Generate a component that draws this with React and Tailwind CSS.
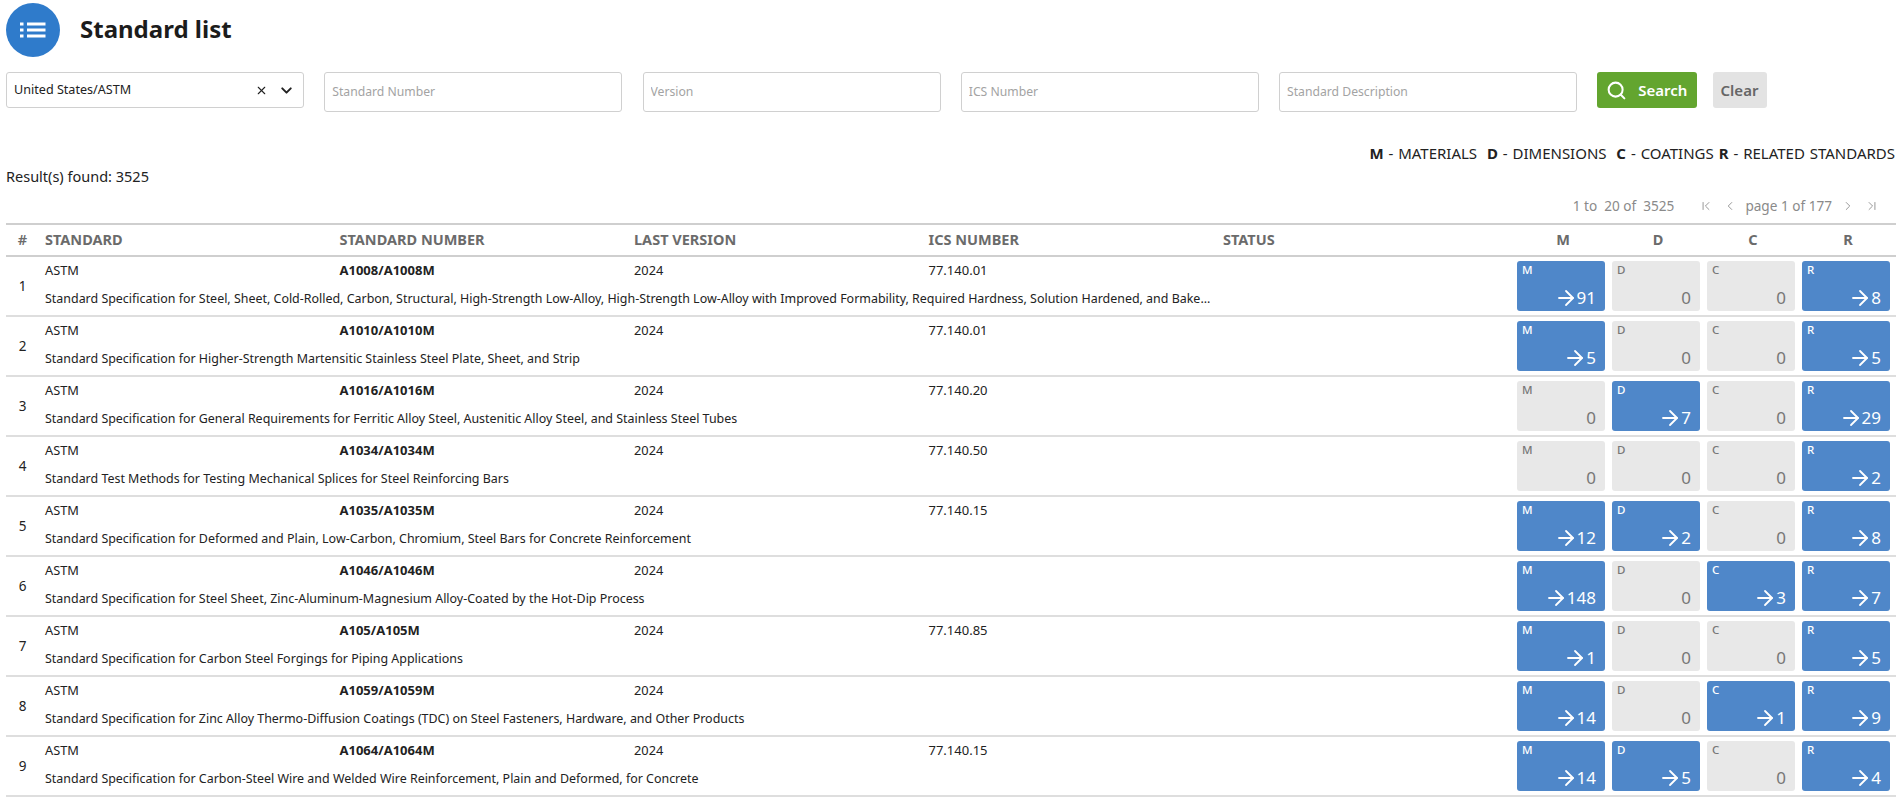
import React from 'react'
import { ChevronDown, X, Search, ArrowRight, ChevronLeft, ChevronRight, ChevronFirst, ChevronLast } from 'lucide-react'

const rows = [
  { n: 1, num: 'A1008/A1008M', ics: '77.140.01', m: 91, d: 0, c: 0, r: 8, desc: 'Standard Specification for Steel, Sheet, Cold-Rolled, Carbon, Structural, High-Strength Low-Alloy, High-Strength Low-Alloy with Improved Formability, Required Hardness, Solution Hardened, and Bake...' },
  { n: 2, num: 'A1010/A1010M', ics: '77.140.01', m: 5, d: 0, c: 0, r: 5, desc: 'Standard Specification for Higher-Strength Martensitic Stainless Steel Plate, Sheet, and Strip' },
  { n: 3, num: 'A1016/A1016M', ics: '77.140.20', m: 0, d: 7, c: 0, r: 29, desc: 'Standard Specification for General Requirements for Ferritic Alloy Steel, Austenitic Alloy Steel, and Stainless Steel Tubes' },
  { n: 4, num: 'A1034/A1034M', ics: '77.140.50', m: 0, d: 0, c: 0, r: 2, desc: 'Standard Test Methods for Testing Mechanical Splices for Steel Reinforcing Bars' },
  { n: 5, num: 'A1035/A1035M', ics: '77.140.15', m: 12, d: 2, c: 0, r: 8, desc: 'Standard Specification for Deformed and Plain, Low-Carbon, Chromium, Steel Bars for Concrete Reinforcement' },
  { n: 6, num: 'A1046/A1046M', ics: '', m: 148, d: 0, c: 3, r: 7, desc: 'Standard Specification for Steel Sheet, Zinc-Aluminum-Magnesium Alloy-Coated by the Hot-Dip Process' },
  { n: 7, num: 'A105/A105M', ics: '77.140.85', m: 1, d: 0, c: 0, r: 5, desc: 'Standard Specification for Carbon Steel Forgings for Piping Applications' },
  { n: 8, num: 'A1059/A1059M', ics: '', m: 14, d: 0, c: 1, r: 9, desc: 'Standard Specification for Zinc Alloy Thermo-Diffusion Coatings (TDC) on Steel Fasteners, Hardware, and Other Products' },
  { n: 9, num: 'A1064/A1064M', ics: '77.140.15', m: 14, d: 5, c: 0, r: 4, desc: 'Standard Specification for Carbon-Steel Wire and Welded Wire Reinforcement, Plain and Deformed, for Concrete' },
]

const Tile = ({ label, value }) => {
  const active = value > 0
  return (
    <div className={`h-[50px] rounded-[3px] px-[5px] pt-[2px] pb-[3px] flex flex-col justify-between ${active ? 'bg-[#4f87c9] text-white' : 'bg-[#e8e8e8] text-[#777]'}`}>
      <span className="text-[11.5px] leading-[14px] font-medium">{label}</span>
      <span className="flex items-center justify-end h-[20px] pr-[4px] text-[17px] leading-[20px]">
        {active && <ArrowRight size={24} strokeWidth={1.8} className="-mr-[1px]" />}
        {value}
      </span>
    </div>
  )
}

const Field = ({ placeholder }) => (
  <input placeholder={placeholder} className="h-10 w-[298px] rounded-[3px] border border-[#d0d0d0] px-[7px] pb-[1px] text-[12.2px] placeholder:text-[#a3a3a3]" />
)

const App = () => {
  return (
    <div className="h-[800px] overflow-hidden bg-white text-[#222] font-['Noto_Sans',sans-serif]">
      <div className="flex items-center pl-[6px] pt-[3px]">
        <div className="w-[54px] h-[54px] rounded-full bg-[#2f7bcb] flex items-center justify-center text-white">
          <svg width="26" height="16" viewBox="0 0 26 16" fill="white">
            <rect x="0" y="0.5" width="3.5" height="3" />
            <rect x="7" y="0.5" width="18.5" height="3" />
            <rect x="0" y="6.5" width="3.5" height="3" />
            <rect x="7" y="6.5" width="18.5" height="3" />
            <rect x="0" y="12.5" width="3.5" height="3" />
            <rect x="7" y="12.5" width="18.5" height="3" />
          </svg>
        </div>
        <h1 className="ml-[20px] -mt-[2px] text-[24px] font-bold text-[#1c1c1c]">Standard list</h1>
      </div>

      <div className="flex items-start pl-[6px] mt-[15px] gap-[20.25px]">
        <div className="h-[36px] w-[298px] rounded-[3px] border border-[#d0d0d0] flex items-center pl-[7px] pr-[8px] text-[12.6px]">
          <span className="flex-1">United States/ASTM</span>
          <X size={13} className="mr-[10px]" />
          <ChevronDown size={17} strokeWidth={2.8} />
        </div>
        <Field placeholder="Standard Number" />
        <Field placeholder="Version" />
        <Field placeholder="ICS Number" />
        <Field placeholder="Standard Description" />
        <button className="h-[36px] w-[100px] rounded-[3px] bg-[#63a52f] text-white text-[15px] font-semibold flex items-center pl-[9px] gap-[11px]">
          <Search size={21} strokeWidth={2.3} />
          Search
        </button>
        <button className="-ml-[5px] h-[36px] w-[54px] rounded-[3px] bg-[#e3e3e3] text-[#666] text-[15px] font-semibold">Clear</button>
      </div>

      <div className="flex justify-end pr-[5px] mt-[32px] text-[15px] leading-[18px] [word-spacing:1px]">
        <span><b>M</b> - MATERIALS&nbsp;&nbsp;<b>D</b> - DIMENSIONS&nbsp;&nbsp;<b>C</b> - COATINGS <b>R</b> - RELATED STANDARDS</span>
      </div>
      <div className="pl-[6px] mt-[5px] text-[14.5px] leading-[18px]">Result(s) found: 3525</div>

      <div className="flex items-center justify-end pr-[21.5px] mt-[11px] h-[20px] text-[13.6px] text-[#8a8a8a]">
        <span>1 to&nbsp;&nbsp;20 of&nbsp;&nbsp;3525</span>
        <ChevronFirst size={14} strokeWidth={1.5} className="ml-[24.5px]" />
        <ChevronLeft size={14} strokeWidth={1.5} className="ml-[10px]" />
        <span className="ml-[8.5px]">page 1 of 177</span>
        <ChevronRight size={14} strokeWidth={1.5} className="ml-[9px]" />
        <ChevronLast size={14} strokeWidth={1.5} className="ml-[9.5px]" />
      </div>

      <div className="ml-[6px] mr-[4px] mt-[7px] border-t-2 border-[#cfcfcf]">
        <div className="flex h-[32px] items-center border-b-2 border-[#cfcfcf] text-[14.5px] font-bold text-[#6b6b6b]">
          <div className="w-[33px] text-center font-semibold">#</div>
          <div className="w-[294.5px] pl-[6px]">STANDARD</div>
          <div className="w-[294.5px] pl-[6px]">STANDARD NUMBER</div>
          <div className="w-[294.5px] pl-[6px]">LAST VERSION</div>
          <div className="w-[294.5px] pl-[6px]">ICS NUMBER</div>
          <div className="w-[294.5px] pl-[6px]">STATUS</div>
          <div className="flex-1 grid grid-cols-4 gap-[7px] pl-[7.5px] pr-[4px] text-center">
            <span>M</span><span>D</span><span>C</span><span>R</span>
          </div>
        </div>
        {rows.map((r) => (
          <div key={r.n} className="flex h-[60px] items-center border-b-2 border-[#dedede] text-[12.45px]">
            <div className="w-[33px] text-center text-[13.5px]">{r.n}</div>
            <div className="w-[1472.5px] pl-[6px] mb-[3px]">
              <div className="flex leading-[18px] text-[12.8px]">
                <div className="w-[294.5px]">ASTM</div>
                <div className="w-[294.5px] text-[13px] font-bold">{r.num}</div>
                <div className="w-[294.5px]">2024</div>
                <div className="w-[294.5px] text-[13px]">{r.ics}</div>
              </div>
              <div className="mt-[11px] leading-[18px] whitespace-nowrap">{r.desc}</div>
            </div>
            <div className="flex-1 grid grid-cols-4 gap-[7px] pl-[5.5px] pr-[6px]">
              <Tile label="M" value={r.m} />
              <Tile label="D" value={r.d} />
              <Tile label="C" value={r.c} />
              <Tile label="R" value={r.r} />
            </div>
          </div>
        ))}
      </div>
    </div>
  )
}

export default App
